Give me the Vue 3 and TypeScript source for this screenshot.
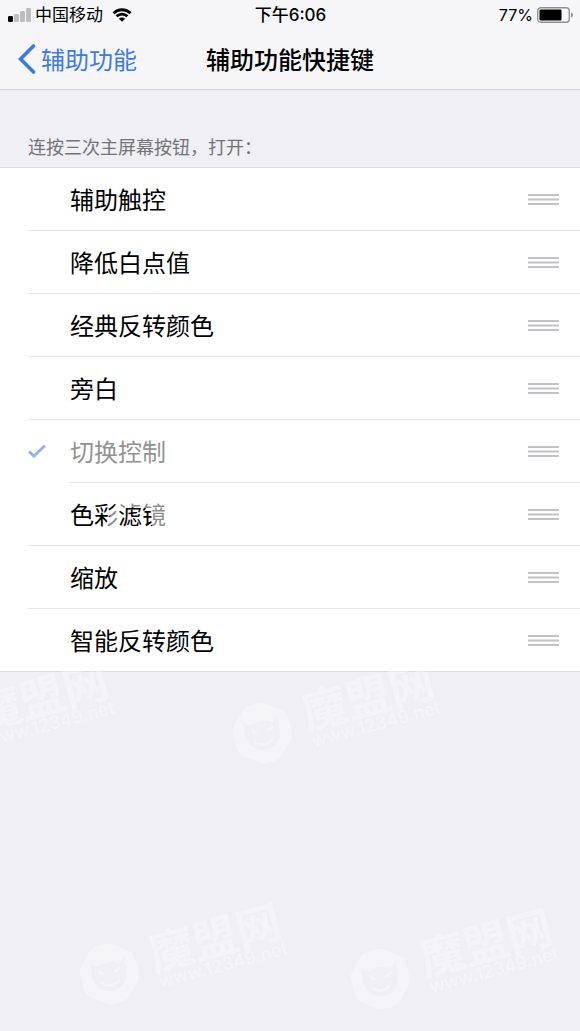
<script setup lang="ts">
import { ref } from 'vue'

interface Shortcut {
  id: string
  label: string
  checked?: boolean
  locked?: boolean
}

interface Mark {
  x: number
  y: number
}

const shortcuts = ref<Shortcut[]>([
  { id: 'touch', label: '辅助触控' },
  { id: 'white', label: '降低白点值' },
  { id: 'classic', label: '经典反转颜色' },
  { id: 'voice', label: '旁白' },
  { id: 'switch', label: '切换控制', checked: true, locked: true },
  { id: 'filter', label: '色彩滤镜' },
  { id: 'zoom', label: '缩放' },
  { id: 'smart', label: '智能反转颜色' },
])

const marks: Mark[] = [
  { x: -64, y: 733 },
  { x: 262, y: 733 },
  { x: 109, y: 974 },
  { x: 380, y: 979 },
]

function toggle(item: Shortcut): void {
  item.checked = !item.checked
}
</script>

<template>
  <div class="screen">
    <header class="top">
      <div class="status">
        <div class="carrier">
          <svg class="signal" viewBox="0 0 24 14" aria-hidden="true">
            <rect x="0" y="8" width="5" height="6" rx="1.2" fill="#000" />
            <rect x="6" y="6" width="5" height="8" rx="1.2" fill="#bdbdc0" />
            <rect x="12" y="3" width="5" height="11" rx="1.2" fill="#bdbdc0" />
            <rect x="18" y="0" width="5" height="14" rx="1.2" fill="#bdbdc0" />
          </svg>
          <span>中国移动</span>
          <svg class="wifi" viewBox="0 0 20 14" aria-hidden="true">
            <path d="M1.5 5.2A12.2 12.2 0 0 1 18.5 5.2" />
            <path d="M4.6 8.3A7.8 7.8 0 0 1 15.4 8.3" />
            <path class="dot" d="M6.9 10.7A4.4 4.4 0 0 1 13.1 10.7L10 13.8Z" />
          </svg>
        </div>
        <div class="time">下午6:06</div>
        <div class="power">
          <span>77%</span>
          <svg class="battery" viewBox="0 0 36 16" aria-hidden="true">
            <rect x="0.7" y="0.7" width="31.6" height="14.6" rx="3.2" fill="#fafafa" stroke="#8f8f92" stroke-width="1.4" />
            <rect x="2.5" y="2.5" width="22" height="11" rx="1" fill="#000" />
            <path d="M34 5.5Q36 6 36 8T34 10.5Z" fill="#8f8f92" />
          </svg>
        </div>
      </div>
      <nav class="nav">
        <a class="back" href="#">
          <svg class="chevron" viewBox="0 0 18 30" aria-hidden="true">
            <path d="M15.5 2L2.5 15L15.5 28" />
          </svg>
          <span>辅助功能</span>
        </a>
        <h1 class="title">辅助功能快捷键</h1>
      </nav>
    </header>

    <main>
      <h2 class="caption">连按三次主屏幕按钮，打开：</h2>
      <ul class="list">
        <li v-for="item in shortcuts" :key="item.id" class="row" :class="{ locked: item.locked }">
          <button
            class="option"
            type="button"
            :disabled="item.locked"
            :aria-pressed="!!item.checked"
            @click="toggle(item)"
          >
            <span class="tick">
              <svg v-if="item.checked" viewBox="0 0 18 14" aria-hidden="true">
                <path d="M1 7.5L6 12L17 1.5" />
              </svg>
            </span>
            <span class="label">{{ item.label }}</span>
          </button>
          <button class="handle" type="button" :aria-label="'移动' + item.label">
            <svg viewBox="0 0 31 12" aria-hidden="true">
              <path d="M0 2H31M0 6.5H31M0 11H31" />
            </svg>
          </button>
        </li>
      </ul>
    </main>

    <svg class="watermark" aria-hidden="true">
      <path class="veil" d="M104 532L109 518L117 502H152V509L144 508L126 507L118 512V532Z" />
      <path class="veil" d="M152 500H168V530H152Z" />
      <g v-for="(mark, i) in marks" :key="i" :transform="`translate(${mark.x} ${mark.y})`">
        <path
          class="badge"
          d="M-4 -30Q0 -31 5 -29L20 -23Q25 -21 26 -16L30 0Q30 4 28 9L20 22Q17 27 12 28L4 30Q-1 31 -6 28L-20 23Q-24 20 -25 16L-29 0Q-30 -4 -27 -9L-19 -23Q-16 -27 -11 -28ZM-19 -11Q-17 -4 -17 2C-15 12 -8 17 1 17C11 17 17 10 18 0Q17 -7 15 -17Q13 -11 8 -11Q0 -14 -9 -8Q-15 -7 -19 -11Z"
        />
        <path class="face" d="M-11 -4Q-6 -3 -4 0Q-8 3 -10 -1ZM4 -2Q7 -6 11 -8Q12 -3 7 -2ZM-10 7Q1 14 12 4Q9 13 1 13Q-6 13 -10 7Z" />
        <g transform="rotate(-15)">
          <text class="name" x="44" y="9">魔盟网</text>
          <text class="site" x="46" y="27">www.12349.net</text>
        </g>
      </g>
    </svg>
  </div>
</template>

<style>
body {
  margin: 0;
  background: #efeff4;
}
</style>

<style scoped>
.screen {
  position: relative;
  min-height: 100vh;
  overflow: hidden;
  background: #efeff4;
  color: #000;
  font-family: Inter, 'Noto Sans CJK SC', sans-serif;
}
.top {
  background: #f6f6f8;
  border-bottom: 1px solid #cfcfd4;
}
.status {
  display: grid;
  grid-template-columns: 1fr auto 1fr;
  align-items: center;
  height: 29px;
  padding: 0 7px 0 8px;
  font-size: 17px;
  line-height: 30px;
}
.carrier,
.power {
  display: flex;
  align-items: center;
}
.power {
  justify-content: flex-end;
  gap: 4px;
  font-size: 16px;
}
.signal {
  width: 24px;
  height: 14px;
  margin-right: 3px;
}
.wifi {
  width: 20px;
  height: 14px;
  margin-left: 9px;
  fill: none;
  stroke: #000;
  stroke-width: 2.8;
}
.wifi .dot {
  fill: #000;
  stroke: none;
}
.time {
  font-weight: 500;
}
.battery {
  width: 36px;
  height: 16px;
}
.nav {
  display: grid;
  grid-template-columns: 1fr auto 1fr;
  align-items: center;
  height: 60px;
  padding: 0 18px;
}
.back {
  display: flex;
  align-items: center;
  gap: 5px;
  color: #3b7ae0;
  font-size: 24px;
  line-height: 36px;
  text-decoration: none;
}
.back span,
.title,
.label {
  padding-top: 3px;
}
.chevron {
  width: 18px;
  height: 30px;
  fill: none;
  stroke: #3b7ae0;
  stroke-width: 3.6;
  stroke-linecap: round;
}
.title {
  margin: 0;
  font-size: 24px;
  font-weight: 500;
  line-height: 36px;
}
.caption {
  margin: 0;
  padding: 45px 28px 6px;
  color: #737378;
  font-size: 18px;
  font-weight: 400;
  line-height: 26px;
}
.list {
  margin: 0;
  padding: 0;
  list-style: none;
  background: #fff;
  border-top: 1px solid #dcdce0;
}
.row {
  display: flex;
  box-sizing: border-box;
  height: 63px;
  padding-bottom: 1px;
  background: linear-gradient(#e6e6e9, #e6e6e9) 28px 100% / 100% 1px no-repeat;
}
.row.locked {
  background-position-x: 69px;
}
.row:last-child {
  background: none;
  border-bottom: 1px solid #dcdce0;
  padding-bottom: 0;
}
.option,
.handle {
  display: flex;
  align-items: center;
  padding: 0;
  border: 0;
  background: none;
  color: inherit;
  font: inherit;
}
.option {
  flex: 1;
  padding-left: 28px;
  font-size: 24px;
  line-height: 36px;
  text-align: left;
}
.tick {
  display: flex;
  width: 42px;
}
.tick svg {
  width: 18px;
  height: 14px;
  fill: none;
  stroke: #8fb5ee;
  stroke-width: 3;
}
.locked .label {
  color: #929292;
}
.handle {
  padding: 0 21px;
}
.handle svg {
  width: 31px;
  height: 12px;
  stroke: #c2c2c7;
  stroke-width: 1.8;
}
.watermark {
  position: absolute;
  inset: 0;
  width: 100%;
  height: 100%;
  pointer-events: none;
}
.badge,
.face,
.name,
.site {
  fill: #fff;
  fill-opacity: 0.4;
}
.badge {
  fill-rule: evenodd;
}
.name {
  font-size: 45px;
  font-weight: 700;
}
.site {
  font-size: 18px;
  font-weight: 500;
}
.veil {
  fill: #fff;
  fill-opacity: 0.55;
}
</style>
